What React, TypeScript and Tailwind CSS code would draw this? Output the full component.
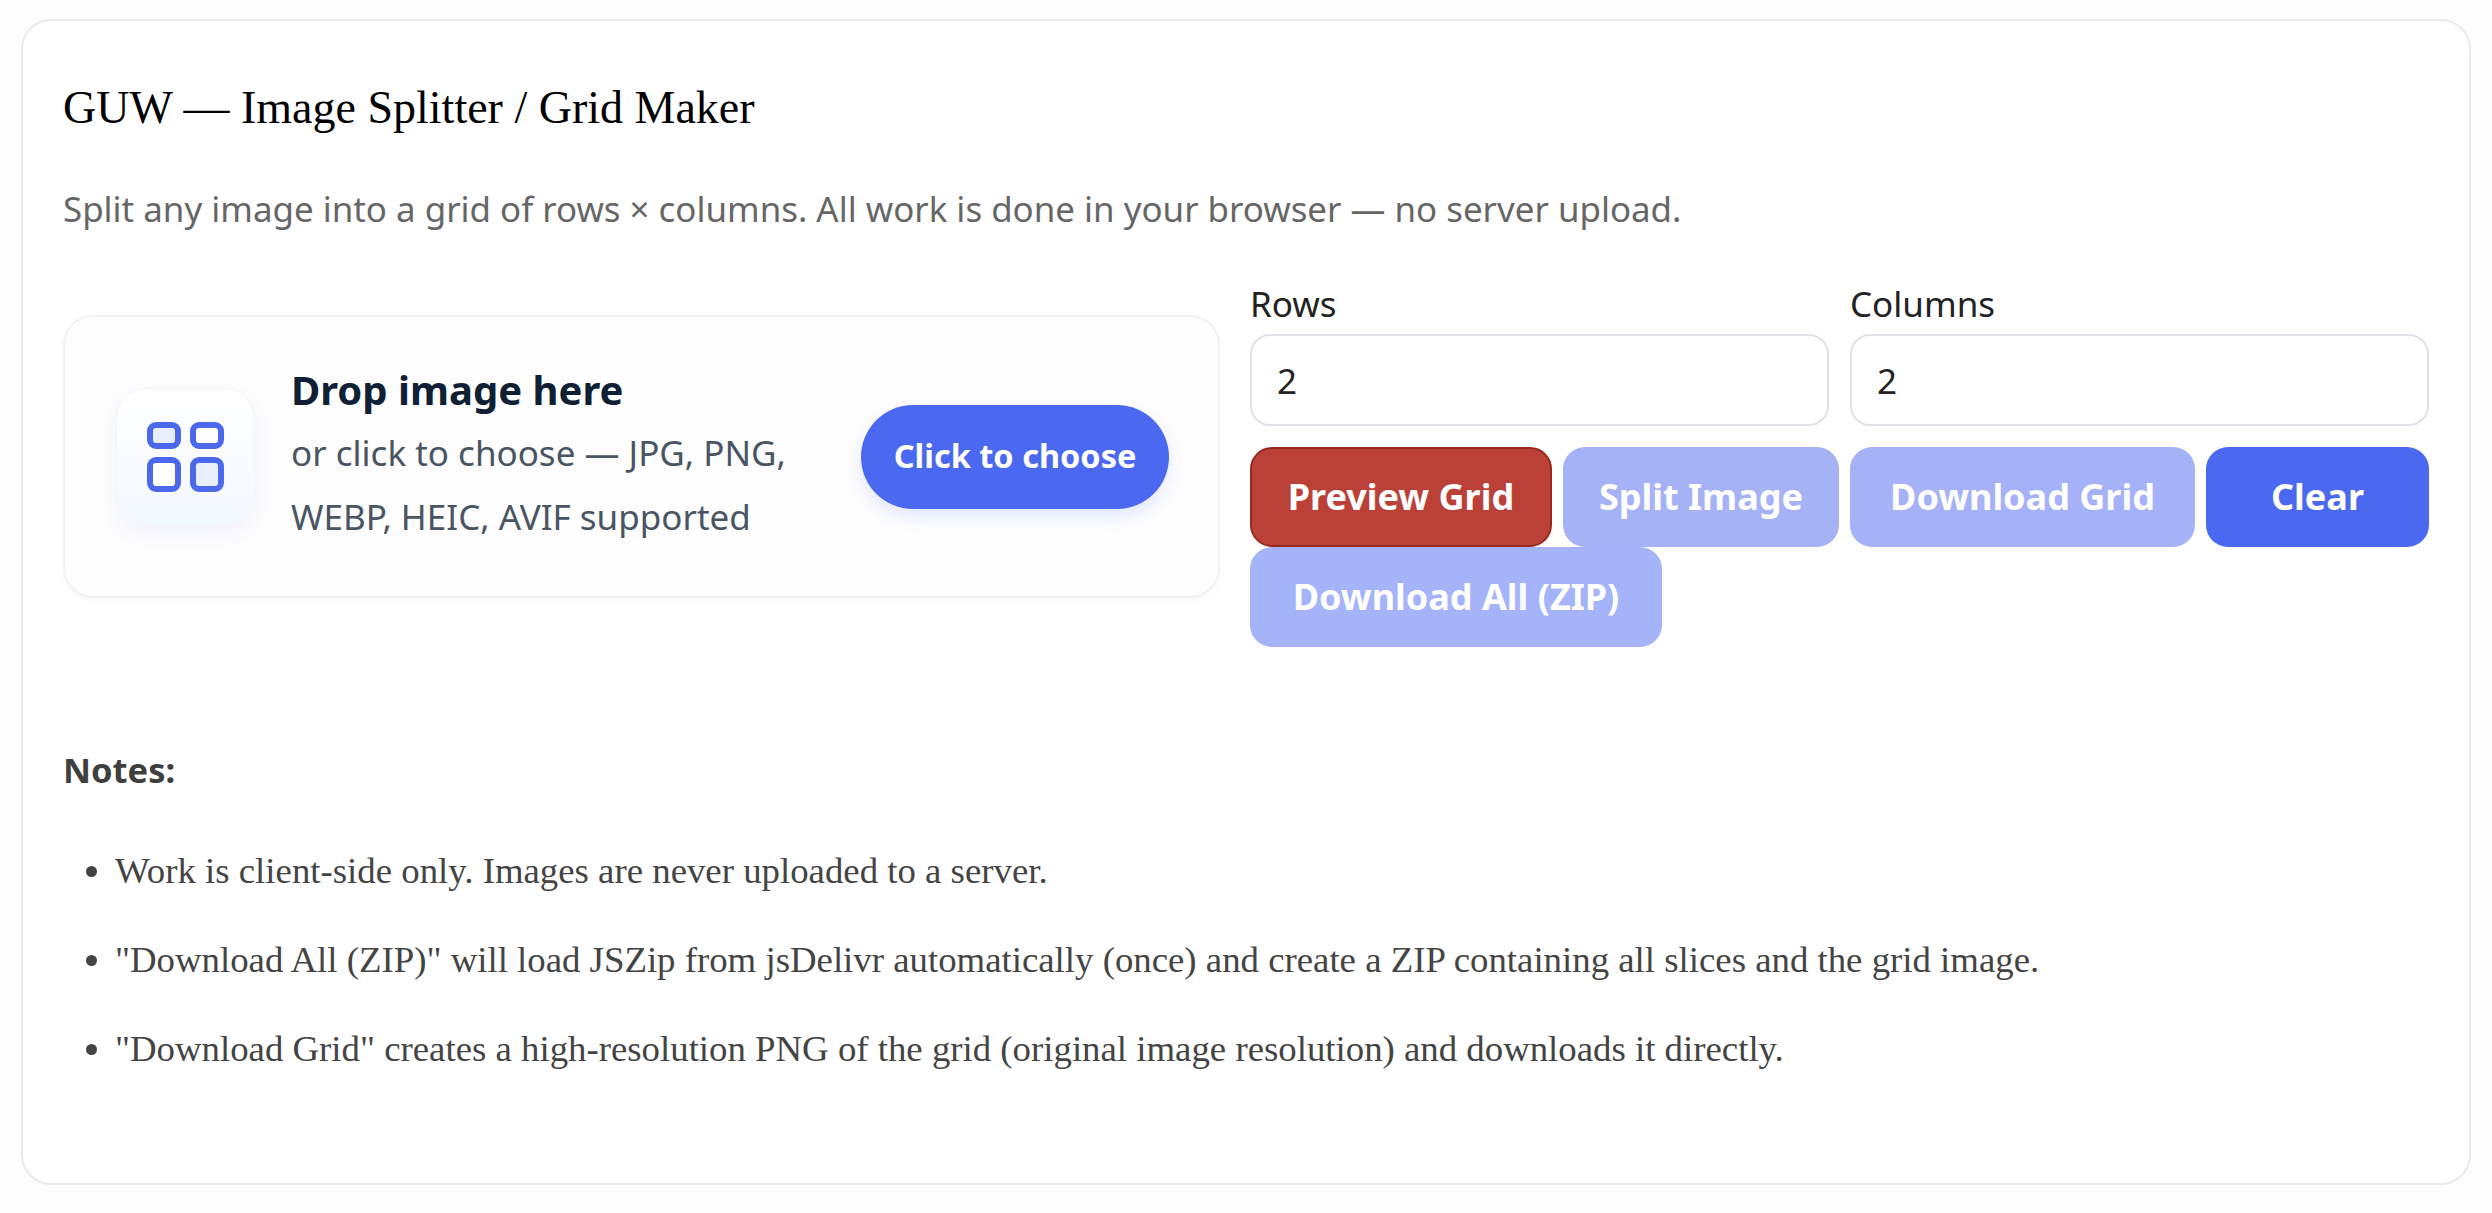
const sans = "font-['Noto_Sans','Open_Sans',sans-serif]";

function GridIcon() {
  return (
    <svg width="77" height="70" viewBox="0 0 77 70" fill="none" stroke="#4b69ea" strokeWidth="6">
      <rect x="3" y="3" width="28" height="21" rx="6" fill="#e9eefc" />
      <rect x="46" y="3" width="28" height="21" rx="6" fill="#ffffff" />
      <rect x="3" y="38" width="28" height="29" rx="6" fill="#ffffff" />
      <rect x="46" y="38" width="28" height="29" rx="6" fill="#e9eefc" />
    </svg>
  );
}

function Field({ label }: { label: string }) {
  return (
    <label className="block">
      <span className="block text-[35px] leading-[48px] text-[#222222]">{label}</span>
      <input
        type="number"
        defaultValue={2}
        className="mt-[6px] block h-[92px] w-full rounded-[20px] border-2 border-[#e2e1e8] bg-white px-[25px] text-[35px] text-[#222222] outline-none"
      />
    </label>
  );
}

function Btn({ children, className }: { children: string; className: string }) {
  return (
    <button className={"h-[100px] rounded-[22px] px-[30px] text-[36px] font-bold text-white " + className}>
      {children}
    </button>
  );
}

export default function App() {
  return (
    <div className="min-h-[1213px] bg-[#fdfdfe] px-[21px] pt-[19px]">
      <div className="h-[1166px] rounded-[30px] border-2 border-[#e9e9ee] bg-white px-[40px]">
        <h1 className="pt-[59px] font-['Liberation_Serif',serif] text-[46px] leading-[56px] text-black">
          GUW — Image Splitter / Grid Maker
        </h1>
        <p className={sans + " mt-[49px] text-[34.9px] leading-[48px] text-[#666666]"}>
          Split any image into a grid of rows × columns. All work is done in your browser — no server upload.
        </p>

        <div className={sans + " mt-[47px] grid grid-cols-[1157px_1fr] gap-[30px]"}>
          <div className="mt-[35px] self-start flex h-[283px] items-center rounded-[30px] border-2 border-[#f3f3f6] bg-[#fdfdfe] pl-[51px] pr-[49px] shadow-[0_2px_6px_rgba(30,40,90,0.03)]">
            <div className="flex h-[138px] w-[139px] shrink-0 items-center justify-center rounded-[30px] border border-[#f5f5f8] bg-gradient-to-b from-white to-[#f3f8ff] shadow-[0_8px_20px_rgba(60,90,200,0.06)]">
              <GridIcon />
            </div>
            <div className="ml-[36px] min-w-0 flex-1">
              <div className="text-[40px] font-bold leading-[52px] text-[#0f2035]">Drop image here</div>
              <div className="mt-[5px] text-[35px] leading-[64px] text-[#4a5563]">
                or click to choose — JPG, PNG,
                <br />
                WEBP, HEIC, AVIF supported
              </div>
            </div>
            <button className="h-[104px] w-[308px] shrink-0 rounded-full bg-[#4b69f0] text-[32.5px] font-bold text-white shadow-[0_8px_16px_rgba(75,105,240,0.14)]">
              Click to choose
            </button>
          </div>

          <div>
            <div className="grid grid-cols-2 gap-x-[21px]">
              <Field label="Rows" />
              <Field label="Columns" />
            </div>
            <div className="mt-[21px] flex flex-wrap gap-x-[11px]">
              <Btn className="w-[302px] border-2 border-[#99291f] bg-[#bb4038]">Preview Grid</Btn>
              <Btn className="w-[276px] bg-[#a5b3f6]">Split Image</Btn>
              <Btn className="w-[345px] bg-[#a6b2f7]">Download Grid</Btn>
              <Btn className="grow bg-[#4b69f0]">Clear</Btn>
              <Btn className="w-[412px] bg-[#a5b3f9]">Download All (ZIP)</Btn>
            </div>
          </div>
        </div>

        <p className={sans + " mt-[99px] text-[34.5px] font-bold leading-[48px] text-[#3f3f3f]"}>Notes:</p>
        <ul className="mt-[55px] list-disc pl-[52px] font-['Liberation_Serif',serif] text-[36.8px] leading-[44px] text-[#444444]">
          <li>Work is client-side only. Images are never uploaded to a server.</li>
          <li className="mt-[45px]">
            "Download All (ZIP)" will load JSZip from jsDelivr automatically (once) and create a ZIP containing all slices and the grid image.
          </li>
          <li className="mt-[45px]">
            "Download Grid" creates a high-resolution PNG of the grid (original image resolution) and downloads it directly.
          </li>
        </ul>
      </div>
    </div>
  );
}
